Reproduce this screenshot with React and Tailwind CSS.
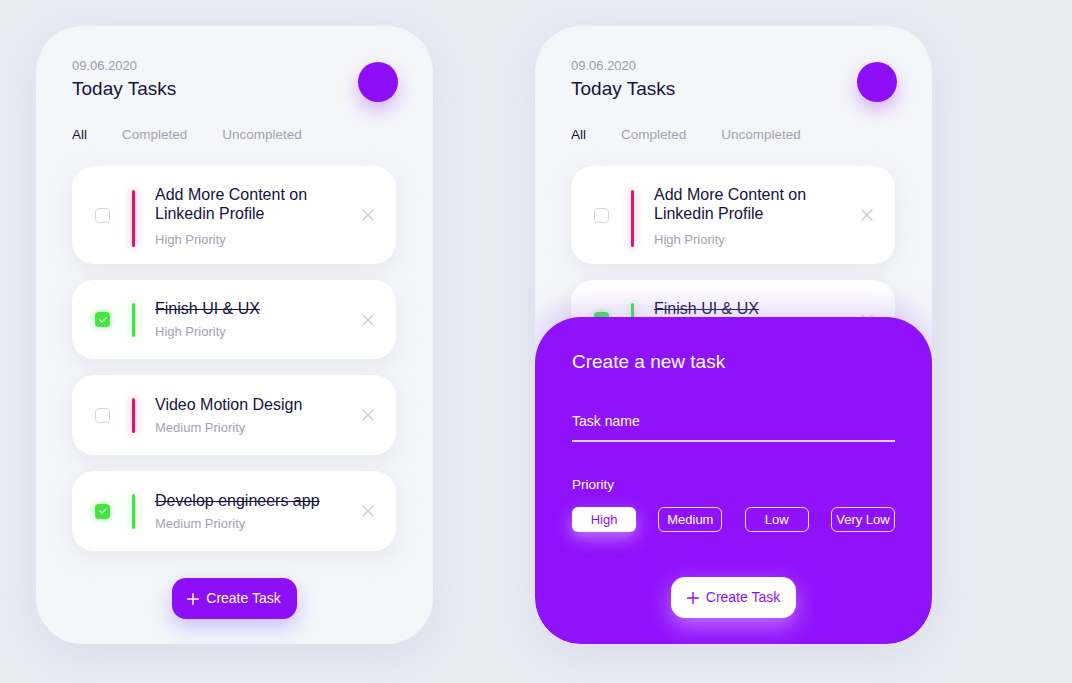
import React from "react";

const font = { fontFamily: '"Liberation Sans", Arial, sans-serif' };

function XIcon() {
  return (
    <svg width="12" height="12" viewBox="0 0 12 12" className="shrink-0">
      <path d="M1 1L11 11M11 1L1 11" stroke="#c9cad3" strokeWidth="1.3" strokeLinecap="round" />
    </svg>
  );
}

function Check({ done }) {
  if (done)
    return (
      <div className="w-[15px] h-[15px] rounded-[4px] bg-[#3fe83b] flex items-center justify-center shrink-0 shadow-[0_0_6px_rgba(63,232,59,0.5)]">
        <svg width="8" height="6" viewBox="0 0 8 6">
          <path d="M1 3L3 5L7 1" stroke="#fff" strokeWidth="1.2" fill="none" strokeLinecap="round" strokeLinejoin="round" />
        </svg>
      </div>
    );
  return <div className="w-[15px] h-[15px] rounded-[4px] border border-[#d5d6dd] bg-white shrink-0" />;
}

function Card({ title, sub, done, h, pink }) {
  const tall = h > 90;
  return (
    <div
      className="bg-white rounded-[22px] flex items-center pl-[23px] pr-[22px] shadow-[0_6px_20px_rgba(200,204,225,0.35)]"
      style={{ height: h }}
    >
      <Check done={done} />
      <div
        className={
          "w-[3px] self-stretch ml-[22px] mr-[20px] rounded-full " +
          (pink
            ? "bg-[#dd176c] shadow-[0_0_8px_rgba(221,23,108,0.45)]"
            : "bg-[#43e43f] shadow-[0_0_8px_rgba(67,228,63,0.45)]")
        }
        style={{ marginTop: tall ? 24 : 23, marginBottom: tall ? 17 : 22 }}
      />
      <div className={"flex-1 flex flex-col " + (tall ? "pt-[3px]" : "")}>
        <div
          className={"text-[16px] leading-[19px] text-[#16133c] " + (done ? "line-through decoration-[#16133c]" : "")}
        >
          {title}
        </div>
        <div className={"text-[13px] leading-[16px] text-[#a3a3b3] " + (tall ? "mt-[9px]" : "mt-[6px]")}>{sub}</div>
      </div>
      <XIcon />
    </div>
  );
}

function PlusIcon({ color }) {
  return (
    <svg width="12" height="12" viewBox="0 0 12 12" className="shrink-0">
      <path d="M6 0.5V11.5M0.5 6H11.5" stroke={color} strokeWidth="1.4" strokeLinecap="round" />
    </svg>
  );
}

function Panel({ children }) {
  return (
    <div className="relative w-[397px] h-[618px] rounded-[46px] bg-[#f5f6fa] shadow-[0_10px_40px_rgba(190,196,220,0.35)] overflow-hidden shrink-0">
      <div className="pt-[32px] pl-[36px] pr-[37px]">
        <div className="flex items-start justify-between">
          <div className="flex flex-col">
            <div className="text-[13px] leading-[16px] text-[#9c9cab]">09.06.2020</div>
            <div className="text-[19px] leading-[24px] text-[#16133c] mt-[3px]">Today Tasks</div>
          </div>
          <div className="w-[40px] h-[40px] rounded-full bg-[#8e0ff7] mt-[4px] mr-[-2px] shadow-[0_8px_18px_rgba(142,15,247,0.3)]" />
        </div>
        <div className="flex items-center mt-[25px] text-[13.5px] leading-[16px]">
          <span className="text-[#16133c]">All</span>
          <span className="text-[#a3a3b3] ml-[35px]">Completed</span>
          <span className="text-[#a3a3b3] ml-[35px]">Uncompleted</span>
        </div>
        <div className="flex flex-col gap-[16px] mt-[23px]">
          <Card title={<>Add More Content on<br />Linkedin Profile</>} sub="High Priority" h={98} pink />
          <Card title="Finish UI & UX" sub="High Priority" h={79} done />
          <Card title="Video Motion Design" sub="Medium Priority" h={80} pink />
          <Card title="Develop engineers app" sub="Medium Priority" h={80} done />
        </div>
        <div className="flex justify-center mt-[27px]">
          <div className="w-[125px] h-[41px] rounded-[14px] bg-[#8e0ff7] flex items-center justify-center gap-[7px] text-white text-[14px] shadow-[0_8px_20px_rgba(110,90,250,0.35)]">
            <PlusIcon color="#fff" />
            <span>Create Task</span>
          </div>
        </div>
      </div>
      {children}
    </div>
  );
}

function Chip({ label, active }) {
  return (
    <div
      className={
        "w-[64px] h-[25px] rounded-[6px] text-[13px] leading-[15px] flex items-center justify-center whitespace-nowrap " +
        (active
          ? "bg-white text-[#8e0ff7] shadow-[0_6px_16px_rgba(230,200,255,0.55)]"
          : "border-[1.5px] border-[#ecdcff] text-white")
      }
    >
      {label}
    </div>
  );
}

export default function App() {
  return (
    <div className="w-[1072px] h-[683px] bg-[#e9ebf3] flex items-start gap-[102px] pl-[36px] pt-[26px] overflow-hidden" style={font}>
      <Panel />
      <Panel>
        <div className="absolute left-0 right-0 bottom-0 h-[327px] rounded-[46px] bg-[#9012fb] shadow-[0_-8px_30px_rgba(160,120,250,0.35)] pt-[32px] px-[37px] flex flex-col">
          <div className="text-[19px] leading-[26px] text-white">Create a new task</div>
          <div className="text-[14px] leading-[16px] text-white mt-[38px]">Task name</div>
          <div className="h-[2px] bg-[#e4d0ff] mt-[11px]" />
          <div className="text-[13.5px] leading-[16px] text-white mt-[35px]">Priority</div>
          <div className="flex justify-between mt-[14px]">
            <Chip label="High" active />
            <Chip label="Medium" />
            <Chip label="Low" />
            <Chip label="Very Low" />
          </div>
          <div className="flex justify-center mt-[45px]">
            <div className="w-[125px] h-[41px] rounded-[14px] bg-white flex items-center justify-center gap-[7px] text-[#8e0ff7] text-[14px] shadow-[0_8px_22px_rgba(220,180,255,0.6)]">
              <PlusIcon color="#8e0ff7" />
              <span>Create Task</span>
            </div>
          </div>
        </div>
      </Panel>
    </div>
  );
}
